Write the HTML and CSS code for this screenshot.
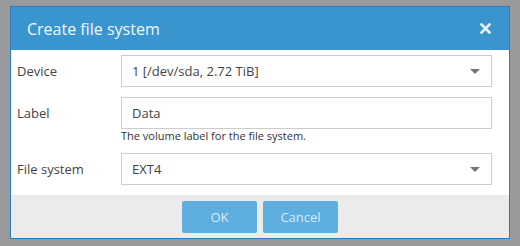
FILE: index.html
```html
<!DOCTYPE html>
<html lang="en">

<head>
    <meta charset="UTF-8">
    <meta name="viewport" content="width=device-width, initial-scale=1.0">
    <title>Create file system</title>
    <link rel="stylesheet" href="styles.css">
</head>

<body>
    <div class="dialog">
        <div class="header">
            <span class="title">Create file system</span>
            <span class="close">
                <svg width="11" height="11" viewBox="0 0 11 11">
                    <path d="M1.5 1.5 L9.5 9.5 M9.5 1.5 L1.5 9.5" stroke="#e8f2fa" stroke-width="2.6" stroke-linecap="square" />
                </svg>
            </span>
        </div>
        <div class="body">
            <div class="row">
                <label>Device</label>
                <div class="field">
                    <div class="input select">1 [/dev/sda, 2.72 TiB]<span class="arrow"></span></div>
                </div>
            </div>
            <div class="row">
                <label>Label</label>
                <div class="field">
                    <div class="input">Data</div>
                    <div class="help">The volume label for the file system.</div>
                </div>
            </div>
            <div class="row">
                <label>File system</label>
                <div class="field">
                    <div class="input select">EXT4<span class="arrow"></span></div>
                </div>
            </div>
        </div>
        <div class="footer">
            <button>OK</button>
            <button>Cancel</button>
        </div>
    </div>
</body>

</html>
```

FILE: styles.css
```css
body {
    margin: 0;
    padding: 6px 10px;
    background-color: #9a9a9d;
    font-family: "Open Sans", sans-serif;
    color: #444;
}

.dialog {
    width: 498px;
    border: 1px solid #2b7cba;
    background-color: #fff;
}

.header {
    height: 43px;
    background-color: #3a95cf;
    display: flex;
    align-items: center;
    justify-content: space-between;
    padding: 0 18px 0 16px;
}

.title {
    font-size: 16px;
    color: #f2f8fc;
}

.close {
    display: flex;
}

.body {
    padding: 5px 17px 10px 6px;
    display: flex;
    flex-direction: column;
    gap: 10px;
}

.row {
    display: flex;
    align-items: flex-start;
}

.row label {
    width: 104px;
    height: 32px;
    line-height: 32px;
    font-size: 13px;
}

.field {
    flex: 1;
}

.input {
    height: 30px;
    line-height: 30px;
    border: 1px solid #ccc;
    padding: 0 10px;
    font-size: 13px;
    position: relative;
}

.arrow {
    position: absolute;
    right: 11px;
    top: 13px;
    border-left: 5px solid transparent;
    border-right: 5px solid transparent;
    border-top: 5px solid #777;
}

.help {
    font-size: 11px;
    line-height: 14px;
    color: #333;
}

.footer {
    height: 43px;
    background-color: #ebebeb;
    display: flex;
    justify-content: center;
    align-items: flex-start;
    gap: 6px;
    padding-top: 6px;
    box-sizing: border-box;
}

button {
    width: 75px;
    height: 32px;
    border: none;
    border-radius: 2px;
    background-color: #5eaee0;
    color: #d8ebf7;
    font-family: "Open Sans", sans-serif;
    font-size: 13px;
}
```
